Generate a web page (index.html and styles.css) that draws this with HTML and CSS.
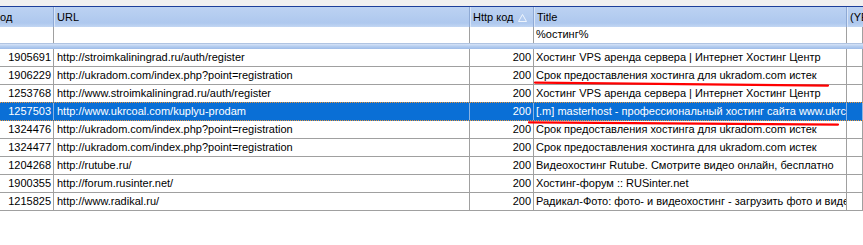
FILE: index.html
```html
<!DOCTYPE html>
<html lang="ru">
<head>
<meta charset="utf-8">
<title>Grid</title>
<link rel="stylesheet" href="styles.css">
</head>
<body>
<div class="grid">
  <div class="topbar"></div>
  <div class="row head">
    <div class="cell">од</div>
    <div class="cell">URL</div>
    <div class="cell sorted">Http код
      <svg class="sort" width="9" height="8" viewBox="0 0 9 8"><path d="M4.5 0.5 L8.5 7.5 L0.5 7.5 Z" fill="none" stroke="#eef4fc" stroke-width="1"/></svg>
    </div>
    <div class="cell">Title</div>
    <div class="cell">(YE</div>
  </div>
  <div class="row filter">
    <div class="cell"></div>
    <div class="cell"></div>
    <div class="cell"></div>
    <div class="cell">%остинг%</div>
    <div class="cell"></div>
  </div>
  <div class="band"></div>
  <div class="body">
    <div class="row data"><div class="cell num">1905691</div><div class="cell">http://stroimkaliningrad.ru/auth/register</div><div class="cell num">200</div><div class="cell">Хостинг VPS аренда сервера | Интернет Хостинг Центр</div><div class="cell"></div></div>
    <div class="row data"><div class="cell num">1906229</div><div class="cell">http://ukradom.com/index.php?point=registration</div><div class="cell num">200</div><div class="cell">Срок предоставления хостинга для ukradom.com истек</div><div class="cell"></div></div>
    <div class="row data"><div class="cell num">1253768</div><div class="cell">http://www.stroimkaliningrad.ru/auth/register</div><div class="cell num">200</div><div class="cell">Хостинг VPS аренда сервера | Интернет Хостинг Центр</div><div class="cell"></div></div>
    <div class="row data selected"><div class="cell num">1257503</div><div class="cell">http://www.ukrcoal.com/kuplyu-prodam</div><div class="cell num">200</div><div class="cell">[.m] masterhost - профессиональный хостинг сайта www.ukrcoal.com</div><div class="cell"></div></div>
    <div class="row data"><div class="cell num">1324476</div><div class="cell">http://ukradom.com/index.php?point=registration</div><div class="cell num">200</div><div class="cell">Срок предоставления хостинга для ukradom.com истек</div><div class="cell"></div></div>
    <div class="row data"><div class="cell num">1324477</div><div class="cell">http://ukradom.com/index.php?point=registration</div><div class="cell num">200</div><div class="cell">Срок предоставления хостинга для ukradom.com истек</div><div class="cell"></div></div>
    <div class="row data"><div class="cell num">1204268</div><div class="cell">http://rutube.ru/</div><div class="cell num">200</div><div class="cell">Видеохостинг Rutube. Смотрите видео онлайн, бесплатно</div><div class="cell"></div></div>
    <div class="row data"><div class="cell num">1900355</div><div class="cell">http://forum.rusinter.net/</div><div class="cell num">200</div><div class="cell">Хостинг-форум :: RUSinter.net</div><div class="cell"></div></div>
    <div class="row data"><div class="cell num">1215825</div><div class="cell">http://www.radikal.ru/</div><div class="cell num">200</div><div class="cell">Радикал-Фото: фото- и видеохостинг - загрузить фото и видео</div><div class="cell"></div></div>
  </div>
  <svg class="marks" width="863" height="245" viewBox="0 0 863 245">
    <path d="M535 82.6 Q690 83.6 828 85.6" fill="none" stroke="#f00" stroke-width="2.2" stroke-linecap="round"/>
    <path d="M529 122.4 Q690 123.2 838 124.6" fill="none" stroke="#f00" stroke-width="2.2" stroke-linecap="round"/>
  </svg>
</div>
</body>
</html>
```

FILE: styles.css
```css
html, body {
  margin: 0;
  padding: 0;
  background: #ffffff;
}

body {
  font-family: "Liberation Sans", Arial, sans-serif;
  font-size: 11px;
  color: #000;
  width: 863px;
  height: 245px;
  overflow: hidden;
}

.grid {
  position: relative;
  width: 863px;
  height: 245px;
  overflow: hidden;
}

.topbar {
  height: 6px;
  background: #f0f0f0;
  border-bottom: 1px solid #1c3e9a;
}

.row {
  display: grid;
  grid-template-columns: 54px 416px 64px 313px 16px;
}

.cell {
  box-sizing: border-box;
  white-space: nowrap;
  overflow: hidden;
  text-overflow: clip;
}

.head {
  height: 20px;
  background: linear-gradient(#bcd2f2, #aec8ee 80%, #c2d6f3);
}

.head .cell {
  line-height: 20px;
  padding-left: 3px;
  border-right: 1px solid #8ea9d4;
  box-shadow: inset 1px 0 0 #d8e5f8;
}

.head .cell:first-child {
  padding-left: 0;
  box-shadow: none;
}

.head .cell:last-child {
  border-right: none;
}

.head .sorted {
  display: flex;
  align-items: center;
  gap: 5px;
}

.sort {
  display: block;
  margin-top: 1px;
}

.filter {
  height: 16px;
  background: #fff;
}

.filter .cell {
  line-height: 15px;
  padding-left: 2px;
  border-right: 1px solid #a0a0a0;
}

.band {
  height: 6px;
  background: linear-gradient(#d6e3f7, #b5cdef 50%, #9dbbe8);
  border-top: 1px solid #b0c4e2;
  box-sizing: border-box;
}

.data {
  height: 18px;
  box-sizing: border-box;
  border-bottom: 1px solid #a0a0a0;
}

.data .cell {
  line-height: 17px;
  padding-left: 3px;
  padding-right: 2px;
  border-right: 1px solid #a0a0a0;
}

.data .cell:nth-child(4) {
  padding-left: 2px;
}

.data .num {
  text-align: right;
  padding-left: 0;
}

.selected {
  background: #0a6fd6;
  color: #fff;
  border-top: 1px dotted #e8963a;
  border-bottom: 1px dotted #e8963a;
  margin-top: -1px;
  height: 19px;
}

.selected .cell {
  border-right-color: #8bb3e3;
}

.marks {
  position: absolute;
  left: 0;
  top: 0;
  pointer-events: none;
}
```
